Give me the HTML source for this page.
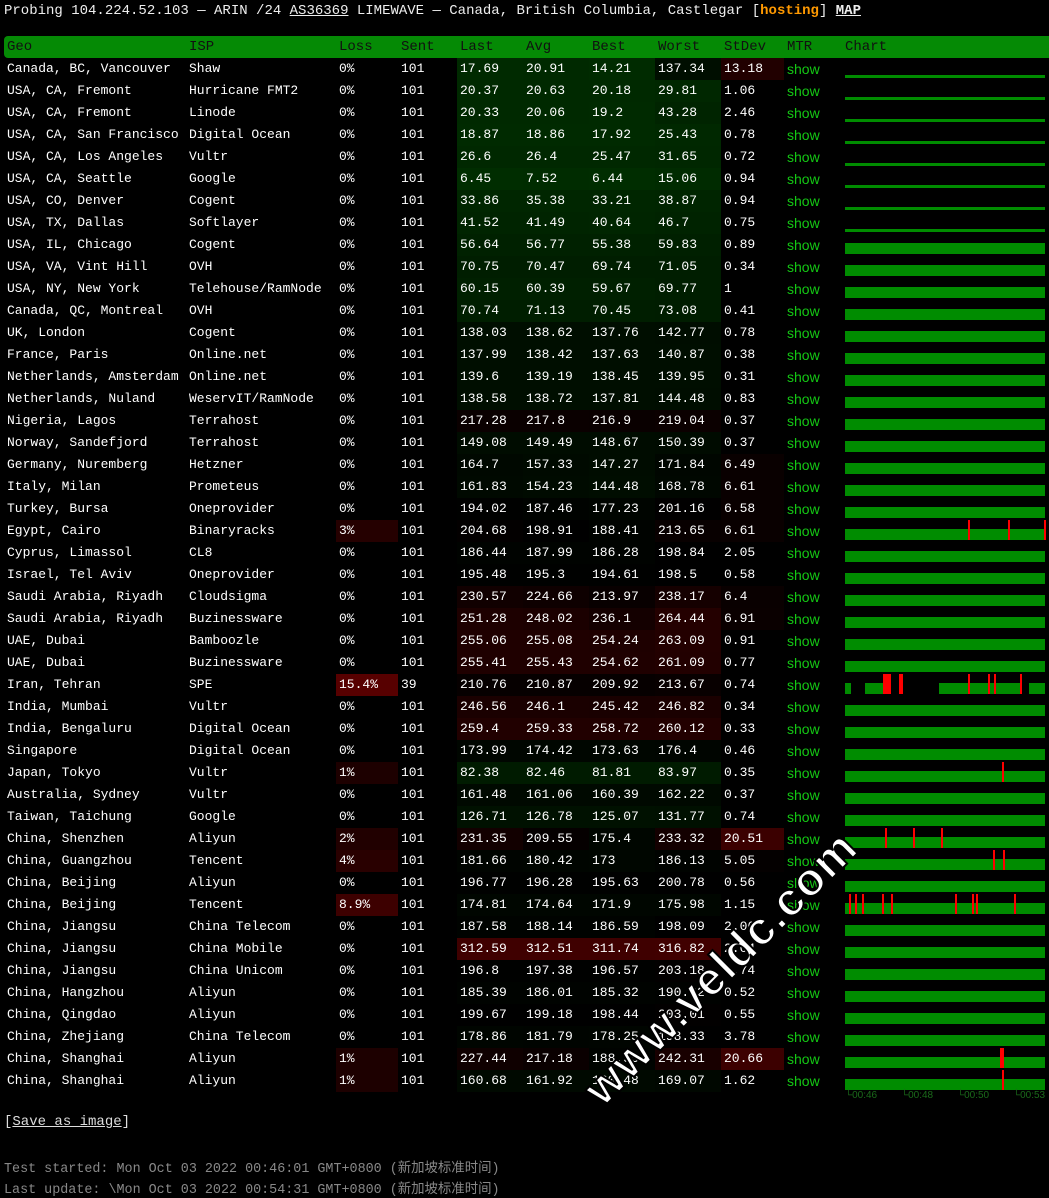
<!DOCTYPE html>
<html><head><meta charset="utf-8">
<style>
html,body{margin:0;padding:0;background:#000;}
body{width:1049px;height:1196px;overflow:hidden;position:relative;font-family:"Liberation Mono",monospace;color:#fff;}
.title{position:absolute;left:4px;top:1px;font-size:14px;line-height:20px;white-space:pre;color:#eee;}
.title u{text-decoration:underline;}
.title .h{color:#f90;font-weight:bold;}
.title b{font-weight:bold;text-decoration:underline;}
table{position:absolute;left:4px;top:36px;border-collapse:collapse;table-layout:fixed;width:1045px;font-size:13px;}
td,th{height:22px;padding:0 0 0 3px;white-space:nowrap;overflow:hidden;text-align:left;font-weight:normal;line-height:22px;}
th{background:#058a05;color:#111;font-size:14px;}
th:first-child{border-radius:4px 0 0 4px;}
td.m{color:#14c814;font-family:"Liberation Sans",sans-serif;font-size:14px;}
td.c{padding:0;position:relative;}
.ch{position:absolute;left:3px;top:0;width:200px;height:22px;}
.ch div{position:absolute;}
.foot{position:absolute;left:4px;font-size:13.4px;white-space:pre;}
.ax{position:absolute;top:1090px;font-size:10px;color:#1a6a1a;font-family:"Liberation Sans",sans-serif;}
.wm{position:absolute;left:520px;top:940px;width:400px;text-align:center;font:bold 47px "Liberation Sans",sans-serif;color:#fff;transform:rotate(-45deg);-webkit-text-stroke:2px #000;letter-spacing:1px;}
</style></head><body>
<div class="title">Probing 104.224.52.103 — ARIN /24 <u>AS36369</u> LIMEWAVE — Canada, British Columbia, Castlegar [<span class="h">hosting</span>] <b>MAP</b></div>
<table id="t">
<colgroup><col style="width:182px"><col style="width:150px"><col style="width:62px"><col style="width:59px"><col style="width:66px"><col style="width:66px"><col style="width:66px"><col style="width:66px"><col style="width:63px"><col style="width:58px"><col style="width:207px"></colgroup>
<tr><th>Geo</th><th>ISP</th><th>Loss</th><th>Sent</th><th>Last</th><th>Avg</th><th>Best</th><th>Worst</th><th>StDev</th><th>MTR</th><th>Chart</th></tr>
<tr><td>Canada, BC, Vancouver</td><td>Shaw</td><td>0%</td><td>101</td><td>17.69</td><td>20.91</td><td>14.21</td><td>137.34</td><td>13.18</td><td class="m">show</td><td class="c"></td></tr>
<tr><td>USA, CA, Fremont</td><td>Hurricane FMT2</td><td>0%</td><td>101</td><td>20.37</td><td>20.63</td><td>20.18</td><td>29.81</td><td>1.06</td><td class="m">show</td><td class="c"></td></tr>
<tr><td>USA, CA, Fremont</td><td>Linode</td><td>0%</td><td>101</td><td>20.33</td><td>20.06</td><td>19.2</td><td>43.28</td><td>2.46</td><td class="m">show</td><td class="c"></td></tr>
<tr><td>USA, CA, San Francisco</td><td>Digital Ocean</td><td>0%</td><td>101</td><td>18.87</td><td>18.86</td><td>17.92</td><td>25.43</td><td>0.78</td><td class="m">show</td><td class="c"></td></tr>
<tr><td>USA, CA, Los Angeles</td><td>Vultr</td><td>0%</td><td>101</td><td>26.6</td><td>26.4</td><td>25.47</td><td>31.65</td><td>0.72</td><td class="m">show</td><td class="c"></td></tr>
<tr><td>USA, CA, Seattle</td><td>Google</td><td>0%</td><td>101</td><td>6.45</td><td>7.52</td><td>6.44</td><td>15.06</td><td>0.94</td><td class="m">show</td><td class="c"></td></tr>
<tr><td>USA, CO, Denver</td><td>Cogent</td><td>0%</td><td>101</td><td>33.86</td><td>35.38</td><td>33.21</td><td>38.87</td><td>0.94</td><td class="m">show</td><td class="c"></td></tr>
<tr><td>USA, TX, Dallas</td><td>Softlayer</td><td>0%</td><td>101</td><td>41.52</td><td>41.49</td><td>40.64</td><td>46.7</td><td>0.75</td><td class="m">show</td><td class="c"></td></tr>
<tr><td>USA, IL, Chicago</td><td>Cogent</td><td>0%</td><td>101</td><td>56.64</td><td>56.77</td><td>55.38</td><td>59.83</td><td>0.89</td><td class="m">show</td><td class="c"></td></tr>
<tr><td>USA, VA, Vint Hill</td><td>OVH</td><td>0%</td><td>101</td><td>70.75</td><td>70.47</td><td>69.74</td><td>71.05</td><td>0.34</td><td class="m">show</td><td class="c"></td></tr>
<tr><td>USA, NY, New York</td><td>Telehouse/RamNode</td><td>0%</td><td>101</td><td>60.15</td><td>60.39</td><td>59.67</td><td>69.77</td><td>1</td><td class="m">show</td><td class="c"></td></tr>
<tr><td>Canada, QC, Montreal</td><td>OVH</td><td>0%</td><td>101</td><td>70.74</td><td>71.13</td><td>70.45</td><td>73.08</td><td>0.41</td><td class="m">show</td><td class="c"></td></tr>
<tr><td>UK, London</td><td>Cogent</td><td>0%</td><td>101</td><td>138.03</td><td>138.62</td><td>137.76</td><td>142.77</td><td>0.78</td><td class="m">show</td><td class="c"></td></tr>
<tr><td>France, Paris</td><td>Online.net</td><td>0%</td><td>101</td><td>137.99</td><td>138.42</td><td>137.63</td><td>140.87</td><td>0.38</td><td class="m">show</td><td class="c"></td></tr>
<tr><td>Netherlands, Amsterdam</td><td>Online.net</td><td>0%</td><td>101</td><td>139.6</td><td>139.19</td><td>138.45</td><td>139.95</td><td>0.31</td><td class="m">show</td><td class="c"></td></tr>
<tr><td>Netherlands, Nuland</td><td>WeservIT/RamNode</td><td>0%</td><td>101</td><td>138.58</td><td>138.72</td><td>137.81</td><td>144.48</td><td>0.83</td><td class="m">show</td><td class="c"></td></tr>
<tr><td>Nigeria, Lagos</td><td>Terrahost</td><td>0%</td><td>101</td><td>217.28</td><td>217.8</td><td>216.9</td><td>219.04</td><td>0.37</td><td class="m">show</td><td class="c"></td></tr>
<tr><td>Norway, Sandefjord</td><td>Terrahost</td><td>0%</td><td>101</td><td>149.08</td><td>149.49</td><td>148.67</td><td>150.39</td><td>0.37</td><td class="m">show</td><td class="c"></td></tr>
<tr><td>Germany, Nuremberg</td><td>Hetzner</td><td>0%</td><td>101</td><td>164.7</td><td>157.33</td><td>147.27</td><td>171.84</td><td>6.49</td><td class="m">show</td><td class="c"></td></tr>
<tr><td>Italy, Milan</td><td>Prometeus</td><td>0%</td><td>101</td><td>161.83</td><td>154.23</td><td>144.48</td><td>168.78</td><td>6.61</td><td class="m">show</td><td class="c"></td></tr>
<tr><td>Turkey, Bursa</td><td>Oneprovider</td><td>0%</td><td>101</td><td>194.02</td><td>187.46</td><td>177.23</td><td>201.16</td><td>6.58</td><td class="m">show</td><td class="c"></td></tr>
<tr><td>Egypt, Cairo</td><td>Binaryracks</td><td>3%</td><td>101</td><td>204.68</td><td>198.91</td><td>188.41</td><td>213.65</td><td>6.61</td><td class="m">show</td><td class="c"></td></tr>
<tr><td>Cyprus, Limassol</td><td>CL8</td><td>0%</td><td>101</td><td>186.44</td><td>187.99</td><td>186.28</td><td>198.84</td><td>2.05</td><td class="m">show</td><td class="c"></td></tr>
<tr><td>Israel, Tel Aviv</td><td>Oneprovider</td><td>0%</td><td>101</td><td>195.48</td><td>195.3</td><td>194.61</td><td>198.5</td><td>0.58</td><td class="m">show</td><td class="c"></td></tr>
<tr><td>Saudi Arabia, Riyadh</td><td>Cloudsigma</td><td>0%</td><td>101</td><td>230.57</td><td>224.66</td><td>213.97</td><td>238.17</td><td>6.4</td><td class="m">show</td><td class="c"></td></tr>
<tr><td>Saudi Arabia, Riyadh</td><td>Buzinessware</td><td>0%</td><td>101</td><td>251.28</td><td>248.02</td><td>236.1</td><td>264.44</td><td>6.91</td><td class="m">show</td><td class="c"></td></tr>
<tr><td>UAE, Dubai</td><td>Bamboozle</td><td>0%</td><td>101</td><td>255.06</td><td>255.08</td><td>254.24</td><td>263.09</td><td>0.91</td><td class="m">show</td><td class="c"></td></tr>
<tr><td>UAE, Dubai</td><td>Buzinessware</td><td>0%</td><td>101</td><td>255.41</td><td>255.43</td><td>254.62</td><td>261.09</td><td>0.77</td><td class="m">show</td><td class="c"></td></tr>
<tr><td>Iran, Tehran</td><td>SPE</td><td>15.4%</td><td>39</td><td>210.76</td><td>210.87</td><td>209.92</td><td>213.67</td><td>0.74</td><td class="m">show</td><td class="c"></td></tr>
<tr><td>India, Mumbai</td><td>Vultr</td><td>0%</td><td>101</td><td>246.56</td><td>246.1</td><td>245.42</td><td>246.82</td><td>0.34</td><td class="m">show</td><td class="c"></td></tr>
<tr><td>India, Bengaluru</td><td>Digital Ocean</td><td>0%</td><td>101</td><td>259.4</td><td>259.33</td><td>258.72</td><td>260.12</td><td>0.33</td><td class="m">show</td><td class="c"></td></tr>
<tr><td>Singapore</td><td>Digital Ocean</td><td>0%</td><td>101</td><td>173.99</td><td>174.42</td><td>173.63</td><td>176.4</td><td>0.46</td><td class="m">show</td><td class="c"></td></tr>
<tr><td>Japan, Tokyo</td><td>Vultr</td><td>1%</td><td>101</td><td>82.38</td><td>82.46</td><td>81.81</td><td>83.97</td><td>0.35</td><td class="m">show</td><td class="c"></td></tr>
<tr><td>Australia, Sydney</td><td>Vultr</td><td>0%</td><td>101</td><td>161.48</td><td>161.06</td><td>160.39</td><td>162.22</td><td>0.37</td><td class="m">show</td><td class="c"></td></tr>
<tr><td>Taiwan, Taichung</td><td>Google</td><td>0%</td><td>101</td><td>126.71</td><td>126.78</td><td>125.07</td><td>131.77</td><td>0.74</td><td class="m">show</td><td class="c"></td></tr>
<tr><td>China, Shenzhen</td><td>Aliyun</td><td>2%</td><td>101</td><td>231.35</td><td>209.55</td><td>175.4</td><td>233.32</td><td>20.51</td><td class="m">show</td><td class="c"></td></tr>
<tr><td>China, Guangzhou</td><td>Tencent</td><td>4%</td><td>101</td><td>181.66</td><td>180.42</td><td>173</td><td>186.13</td><td>5.05</td><td class="m">show</td><td class="c"></td></tr>
<tr><td>China, Beijing</td><td>Aliyun</td><td>0%</td><td>101</td><td>196.77</td><td>196.28</td><td>195.63</td><td>200.78</td><td>0.56</td><td class="m">show</td><td class="c"></td></tr>
<tr><td>China, Beijing</td><td>Tencent</td><td>8.9%</td><td>101</td><td>174.81</td><td>174.64</td><td>171.9</td><td>175.98</td><td>1.15</td><td class="m">show</td><td class="c"></td></tr>
<tr><td>China, Jiangsu</td><td>China Telecom</td><td>0%</td><td>101</td><td>187.58</td><td>188.14</td><td>186.59</td><td>198.09</td><td>2.06</td><td class="m">show</td><td class="c"></td></tr>
<tr><td>China, Jiangsu</td><td>China Mobile</td><td>0%</td><td>101</td><td>312.59</td><td>312.51</td><td>311.74</td><td>316.82</td><td>2.04</td><td class="m">show</td><td class="c"></td></tr>
<tr><td>China, Jiangsu</td><td>China Unicom</td><td>0%</td><td>101</td><td>196.8</td><td>197.38</td><td>196.57</td><td>203.18</td><td>0.74</td><td class="m">show</td><td class="c"></td></tr>
<tr><td>China, Hangzhou</td><td>Aliyun</td><td>0%</td><td>101</td><td>185.39</td><td>186.01</td><td>185.32</td><td>190.82</td><td>0.52</td><td class="m">show</td><td class="c"></td></tr>
<tr><td>China, Qingdao</td><td>Aliyun</td><td>0%</td><td>101</td><td>199.67</td><td>199.18</td><td>198.44</td><td>203.01</td><td>0.55</td><td class="m">show</td><td class="c"></td></tr>
<tr><td>China, Zhejiang</td><td>China Telecom</td><td>0%</td><td>101</td><td>178.86</td><td>181.79</td><td>178.25</td><td>198.33</td><td>3.78</td><td class="m">show</td><td class="c"></td></tr>
<tr><td>China, Shanghai</td><td>Aliyun</td><td>1%</td><td>101</td><td>227.44</td><td>217.18</td><td>188.55</td><td>242.31</td><td>20.66</td><td class="m">show</td><td class="c"></td></tr>
<tr><td>China, Shanghai</td><td>Aliyun</td><td>1%</td><td>101</td><td>160.68</td><td>161.92</td><td>160.48</td><td>169.07</td><td>1.62</td><td class="m">show</td><td class="c"></td></tr>
</table>
<div class="ax" style="left:845px">└00:46</div>
<div class="ax" style="left:901px">└00:48</div>
<div class="ax" style="left:957px">└00:50</div>
<div class="ax" style="left:1013px">└00:53</div>
<div class="foot" style="top:1114px;color:#ddd;font-size:14px;">[<u>Save as image</u>]</div>
<div class="foot" style="top:1156px;color:#888;font-family:'Liberation Mono','Noto Sans CJK SC',monospace;">Test started: Mon Oct 03 2022 00:46:01 GMT+0800 (新加坡标准时间)</div>
<div class="foot" style="top:1177px;color:#888;font-family:'Liberation Mono','Noto Sans CJK SC',monospace;">Last update: \Mon Oct 03 2022 00:54:31 GMT+0800 (新加坡标准时间)</div>
<div class="wm">www.veldc.com</div>
<script>
var rows=document.getElementById('t').rows;
function lat(v){if(v<=200){var g=Math.round(46*(200-v)/200);return 'rgb(0,'+g+',0)';}var r=Math.round(Math.min(64,(v-200)*0.56));return 'rgb('+r+',0,0)';}
var reds={22:[123,163,199],33:[157],36:[40,68,96],37:[148,158],39:[4,10,17,37,46,110,127,131,169],46:[155,157],47:[157]};
for(var i=1;i<rows.length;i++){
 var c=rows[i].cells;
 var loss=parseFloat(c[2].textContent);
 if(loss>0)c[2].style.background='rgb('+Math.round(Math.min(90,25+loss*4))+',0,0)';
 for(var k=4;k<8;k++)c[k].style.background=lat(parseFloat(c[k].textContent));
 var s=parseFloat(c[8].textContent);
 if(s>4)c[8].style.background='rgb('+Math.round(Math.min(62,(s-4)*3.6))+',0,0)';
 var h='';
 if(i<=8){h='<div style="left:0;top:17px;width:200px;height:3px;background:#008c00"></div>';}
 else if(i==29){
  var segs=[[0,6],[20,46],[94,200]];
  segs.forEach(function(sg){h+='<div style="left:'+sg[0]+'px;top:9px;width:'+(sg[1]-sg[0])+'px;height:11px;background:#008c00"></div>';});
  h+='<div style="left:175px;top:9px;width:9px;height:11px;background:#000"></div>';
  [[38,8],[54,4],[123,2],[143,2],[149,2],[175,2]].forEach(function(r){h+='<div style="left:'+r[0]+'px;top:0;width:'+r[1]+'px;height:20px;background:#f00"></div>';});
 } else {h='<div style="left:0;top:9px;width:200px;height:11px;background:#008c00"></div>';}
 if(reds[i])reds[i].forEach(function(x){h+='<div style="left:'+x+'px;top:0;width:2px;height:20px;background:#f00"></div>';});
 c[10].innerHTML='<div class="ch">'+h+'</div>';
}
</script>
</body></html>
